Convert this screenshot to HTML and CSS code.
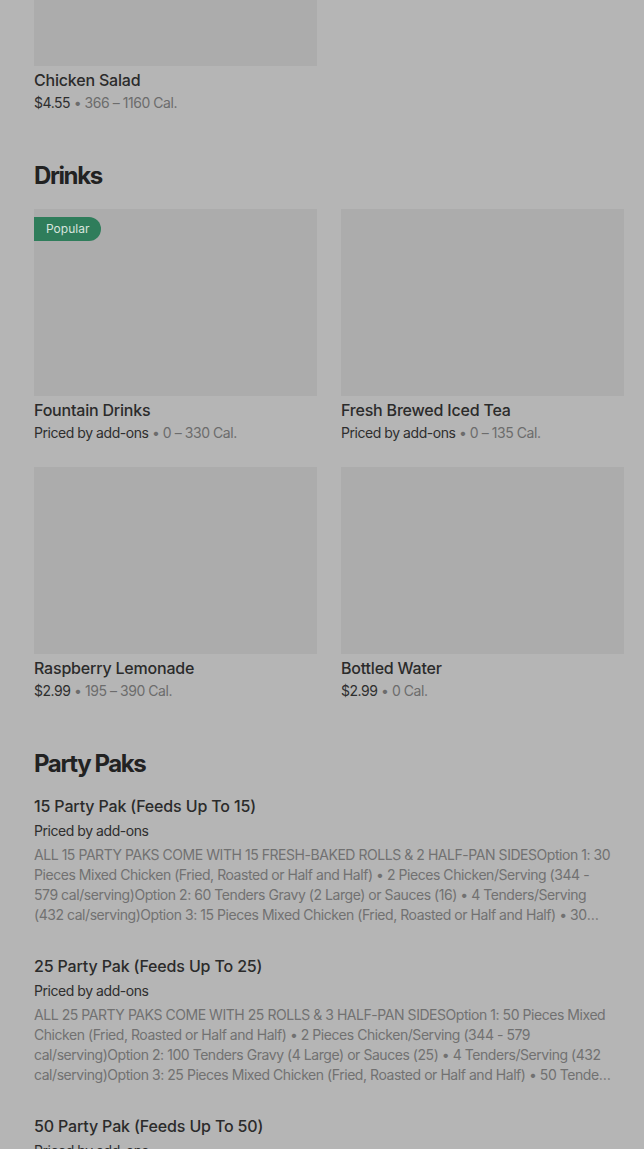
FILE: index.html
```html
<!DOCTYPE html>
<html lang="en">

<head>
	<meta charset="UTF-8">
	<meta name="viewport" content="width=device-width, initial-scale=1.0">
	<title>Menu</title>
	<link rel="stylesheet" href="styles.css">
</head>

<body>
	<div class="menu">
		<!-- fim da secao anterior (rolada para cima) -->
		<div class="grade">
			<div class="item">
				<div class="foto foto-cortada"></div>
				<div class="nome">Chicken Salad</div>
				<div class="preco">$4.55 <span class="cal">&bull; 366 &ndash; 1160 Cal.</span></div>
			</div>
		</div>

		<h2 class="titulo">Drinks</h2>
		<div class="grade">
			<div class="item">
				<div class="foto"><span class="selo">Popular</span></div>
				<div class="nome">Fountain Drinks</div>
				<div class="preco">Priced by add-ons <span class="cal">&bull; 0 &ndash; 330 Cal.</span></div>
			</div>
			<div class="item">
				<div class="foto"></div>
				<div class="nome">Fresh Brewed Iced Tea</div>
				<div class="preco">Priced by add-ons <span class="cal">&bull; 0 &ndash; 135 Cal.</span></div>
			</div>
			<div class="item">
				<div class="foto"></div>
				<div class="nome">Raspberry Lemonade</div>
				<div class="preco">$2.99 <span class="cal">&bull; 195 &ndash; 390 Cal.</span></div>
			</div>
			<div class="item">
				<div class="foto"></div>
				<div class="nome">Bottled Water</div>
				<div class="preco">$2.99 <span class="cal">&bull; 0 Cal.</span></div>
			</div>
		</div>

		<h2 class="titulo titulo-lista">Party Paks</h2>
		<div class="lista">
			<div class="linha">
				<div class="nome-linha">15 Party Pak (Feeds Up To 15)</div>
				<div class="preco-linha">Priced by add-ons</div>
				<p class="descricao">ALL 15 PARTY PAKS COME WITH 15 FRESH-BAKED ROLLS &amp; 2 HALF-PAN SIDESOption 1: 30 Pieces Mixed Chicken (Fried, Roasted or Half and Half) &bull; 2 Pieces Chicken/Serving (344 - 579 cal/serving)Option 2: 60 Tenders Gravy (2 Large) or Sauces (16) &bull; 4 Tenders/Serving (432 cal/serving)Option 3: 15 Pieces Mixed Chicken (Fried, Roasted or Half and Half) &bull; 30 Tenders Gravy (2 Large) or Sauces (8) &bull; 1 Piece Chicken &amp; 2 Tenders/Serving</p>
			</div>
			<div class="linha">
				<div class="nome-linha">25 Party Pak (Feeds Up To 25)</div>
				<div class="preco-linha">Priced by add-ons</div>
				<p class="descricao">ALL 25 PARTY PAKS COME WITH 25 ROLLS &amp; 3 HALF-PAN SIDESOption 1: 50 Pieces Mixed Chicken (Fried, Roasted or Half and Half) &bull; 2 Pieces Chicken/Serving (344 - 579 cal/serving)Option 2: 100 Tenders Gravy (4 Large) or Sauces (25) &bull; 4 Tenders/Serving (432 cal/serving)Option 3: 25 Pieces Mixed Chicken (Fried, Roasted or Half and Half) &bull; 50 Tenders Gravy (3 Large) or Sauces (13) &bull; 1 Piece Chicken &amp; 2 Tenders/Serving</p>
			</div>
			<div class="linha">
				<div class="nome-linha">50 Party Pak (Feeds Up To 50)</div>
				<div class="preco-linha">Priced by add-ons</div>
				<p class="descricao">ALL 50 PARTY PAKS COME WITH 50 ROLLS &amp; 6 HALF-PAN SIDESOption 1: 100 Pieces Mixed Chicken (Fried, Roasted or Half and Half) &bull; 2 Pieces Chicken/Serving (344 - 579 cal/serving)Option 2: 200 Tenders Gravy (8 Large) or Sauces (50) &bull; 4 Tenders/Serving (432 cal/serving)</p>
			</div>
		</div>
	</div>
</body>

</html>
```

FILE: styles.css
```css
body,
html {
	margin: 0;
	font-family: 'Inter', sans-serif;
	background-color: #b5b5b5;
	/* fundo escurecido pelo modal */
}

.menu {
	padding: 0 20px 0 34px;
}

.grade {
	display: grid;
	grid-template-columns: 283px 283px;
	column-gap: 24px;
	row-gap: 24px;
}

.foto {
	position: relative;
	height: 187px;
	background: #acacac;
}

.foto-cortada {
	height: 66px;
}

.selo {
	position: absolute;
	top: 8px;
	left: 0;
	height: 24px;
	line-height: 24px;
	padding: 0 12px;
	background: #2f7d5b;
	color: #d8e4de;
	font-size: 12px;
	border-radius: 0 12px 12px 0;
}

.nome {
	margin-top: 2px;
	font-size: 16px;
	line-height: 24px;
	font-weight: 500;
	letter-spacing: -0.2px;
	color: #2b2b2b;
}

.preco {
	margin-top: 1px;
	font-size: 14px;
	line-height: 20px;
	letter-spacing: -0.45px;
	color: #2e2e2e;
}

.cal {
	color: #6c6c6c;
}

.titulo {
	margin: 47px 0 17px;
	font-size: 24px;
	line-height: 32px;
	font-weight: 700;
	letter-spacing: -1.4px;
	color: #222;
}

.titulo-lista {
	margin-bottom: 0;
}

.linha {
	padding: 14px 0 15px;
}

.nome-linha {
	font-size: 16px;
	line-height: 24px;
	font-weight: 500;
	letter-spacing: -0.15px;
	color: #2b2b2b;
}

.preco-linha {
	margin-top: 3px;
	font-size: 14px;
	line-height: 20px;
	letter-spacing: -0.45px;
	color: #2e2e2e;
}

.descricao {
	max-width: 580px;
	margin: 4px 0 0;
	font-size: 14px;
	line-height: 20px;
	letter-spacing: -0.45px;
	color: #717171;
	display: -webkit-box;
	-webkit-line-clamp: 4;
	-webkit-box-orient: vertical;
	overflow: hidden;
}
```
